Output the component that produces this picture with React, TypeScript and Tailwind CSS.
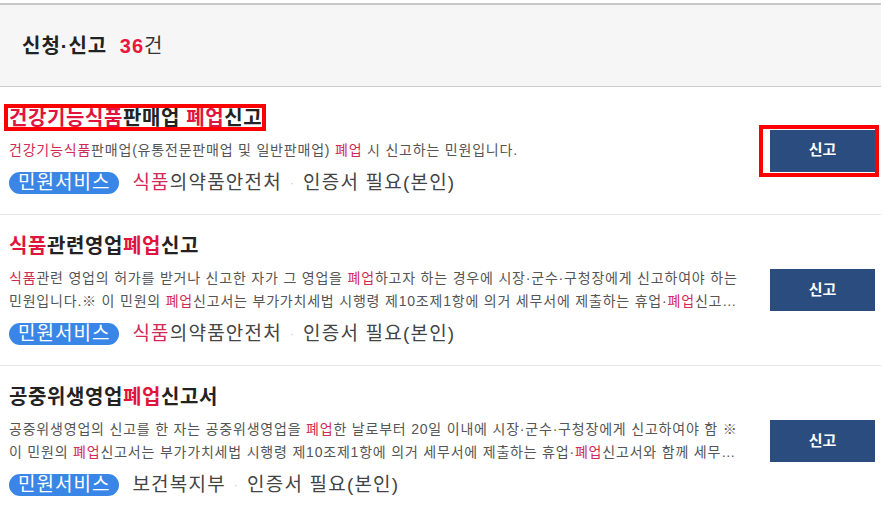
type Seg = { t: string; r?: boolean };

interface Item {
  title: Seg[];
  desc: Seg[];
  org: Seg[];
  marked?: boolean;
}

const items: Item[] = [
  {
    title: [{ t: "건강기능식품", r: true }, { t: "판매업 " }, { t: "폐업", r: true }, { t: "신고" }],
    desc: [
      { t: "건강기능식품", r: true },
      { t: "판매업(유통전문판매업 및 일반판매업) " },
      { t: "폐업", r: true },
      { t: " 시 신고하는 민원입니다." },
    ],
    org: [{ t: "식품", r: true }, { t: "의약품안전처" }],
    marked: true,
  },
  {
    title: [{ t: "식품", r: true }, { t: "관련영업" }, { t: "폐업", r: true }, { t: "신고" }],
    desc: [
      { t: "식품", r: true },
      { t: "관련 영업의 허가를 받거나 신고한 자가 그 영업을 " },
      { t: "폐업", r: true },
      { t: "하고자 하는 경우에 시장·군수·구청장에게 신고하여야 하는 민원입니다.※ 이 민원의 " },
      { t: "폐업", r: true },
      { t: "신고서는 부가가치세법 시행령 제10조제1항에 의거 세무서에 제출하는 휴업·" },
      { t: "폐업", r: true },
      { t: "신고서와 함께 세무서에 제출할 수 있습니다." },
    ],
    org: [{ t: "식품", r: true }, { t: "의약품안전처" }],
  },
  {
    title: [{ t: "공중위생영업" }, { t: "폐업", r: true }, { t: "신고서" }],
    desc: [
      { t: "공중위생영업의 신고를 한 자는 공중위생영업을 " },
      { t: "폐업", r: true },
      { t: "한 날로부터 20일 이내에 시장·군수·구청장에게 신고하여야 함 ※ 이 민원의 " },
      { t: "폐업", r: true },
      { t: "신고서는 부가가치세법 시행령 제10조제1항에 의거 세무서에 제출하는 휴업·" },
      { t: "폐업", r: true },
      { t: "신고서와 함께 세무서에 제출할 수 있음" },
    ],
    org: [{ t: "보건복지부" }],
  },
];

function Segs({ segs, red }: { segs: Seg[]; red: string }) {
  return (
    <>
      {segs.map((s, i) =>
        s.r ? (
          <span key={i} className={red}>
            {s.t}
          </span>
        ) : (
          <span key={i}>{s.t}</span>
        )
      )}
    </>
  );
}

function Row({ item }: { item: Item }) {
  return (
    <li className="flex items-center border-b border-[#e6e6e6] pl-[9px] pr-[6px] pt-[18px] pb-[18px]">
      <div className="min-w-0 flex-1">
        <h3 className="text-[20px] font-bold leading-[26px] tracking-[0.6px] text-[#222]">
          <span className="relative">
            <Segs segs={item.title} red="text-[#e0143c]" />
            {item.marked && (
              <span className="pointer-events-none absolute -left-[5px] -right-[4px] -top-[3px] -bottom-[2px] border-4 border-[#ff0000]" />
            )}
          </span>
        </h3>
        <p className="mt-2 line-clamp-2 text-[14px] leading-[23px] tracking-[0.8px] text-[#555]">
          <Segs segs={item.desc} red="text-[#d22a55]" />
        </p>
        <div className="mt-2 flex items-center text-[19px] leading-[26px] tracking-[1.2px] text-[#444]">
          <span className="h-[22px] rounded-full bg-[#3a86e6] px-[9px] leading-[22px] tracking-[1px] text-white">
            민원서비스
          </span>
          <span className="ml-[13px]">
            <Segs segs={item.org} red="text-[#d22a55]" />
          </span>
          <span className="mx-[8px] text-[12px] text-[#ccc]">·</span>
          <span>인증서 필요(본인)</span>
        </div>
      </div>
      <div className="relative ml-6 shrink-0">
        <button className="h-[42px] w-[105px] bg-[#2b4c7e] text-[15px] font-bold text-white">
          신고
        </button>
        {item.marked && (
          <span className="pointer-events-none absolute -left-[11px] -right-[4px] -top-[5px] -bottom-[5px] border-4 border-[#ff0000]" />
        )}
      </div>
    </li>
  );
}

export default function App() {
  return (
    <div className="h-[510px] w-[884px] overflow-hidden bg-white pt-[3px] font-['Liberation_Sans','Noto_Sans_CJK_KR',sans-serif]">
      <div className="w-[881px]">
        <div className="flex h-[84px] items-center border-t-2 border-b border-t-[#c8c8c8] border-b-[#cccccc] bg-[#f6f6f6] pl-[22px]">
          <h2 className="text-[20px] font-bold tracking-[1px] text-[#222]">
            신청·신고 <span className="ml-[6px] text-[#e8173b]">36</span>
            <span className="font-normal text-[#333]">건</span>
          </h2>
        </div>
        <ul>
          {items.map((it, i) => (
            <Row key={i} item={it} />
          ))}
        </ul>
      </div>
    </div>
  );
}
